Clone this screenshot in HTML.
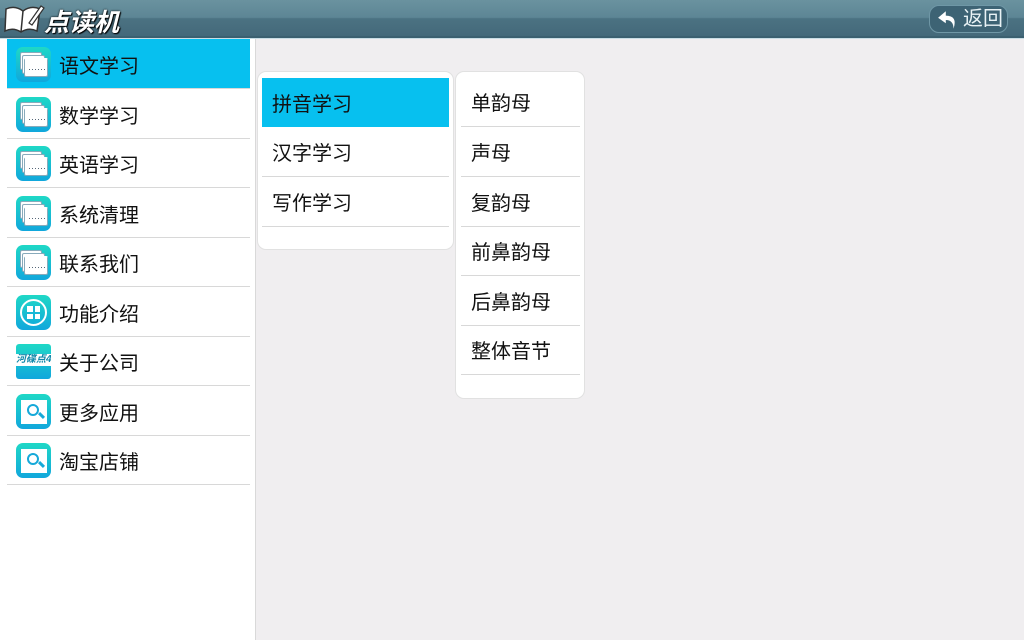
<!DOCTYPE html>
<html><head><meta charset="utf-8"><style>
*{margin:0;padding:0;box-sizing:border-box}
body{width:1024px;height:640px;overflow:hidden;background:#f0eef0;font-family:"Liberation Sans","Noto Sans CJK SC",sans-serif;position:relative}
.hdr{position:absolute;left:0;top:0;width:1024px;height:38px;background:linear-gradient(#6a929f 0,#5d8695 48%,#4b7282 52%,#44697a 100%);border-bottom:2px solid #3b6070}
.hdr:after{content:"";position:absolute;left:0;right:0;bottom:-3px;height:1px;background:#c9dde4}
.logo{position:absolute;left:44px;top:3px;font-size:25px;font-weight:bold;font-style:italic;color:#fff;text-shadow:0 0 2px #000,1px 1px 1px #000}
.back{position:absolute;left:929px;top:5px;width:79px;height:28px;border-radius:10px;background:#3d6374;border:1px solid #6f97a6;color:#e8f2f5;font-size:20px;line-height:27px;padding-left:33px}
.side{position:absolute;left:0;top:39px;width:256px;height:601px;background:#fff;border-right:1px solid #d9d9d9}
.it{position:absolute;left:7px;width:243px;height:50px;border-bottom:1px solid #d8d8d8;font-size:20px;line-height:50px;padding-top:3px;padding-left:52px;color:#111}
.it.on{background:#07c0ef}
.ic{position:absolute;left:9px;top:8px;width:35px;height:35px;border-radius:7px;background:linear-gradient(#1fd8c6,#11a7dc)}
.c1,.c2,.c3{position:absolute;background:#fff;border:1px solid #8ab;border-radius:2px}
.c1{left:4px;top:5px;width:22px;height:18px}
.c2{left:6px;top:8px;width:23px;height:19px}
.c3{left:8px;top:11px;width:24px;height:19px;border-top:2px solid #fff;background:#fff repeating-linear-gradient(90deg,#567 0 1px,transparent 1px 3px) no-repeat 4px 9px/16px 1px}
.pan{position:absolute;background:#fff;border:1px solid #e1e1e1;border-radius:9px}
.r{position:absolute;font-size:20px;line-height:48px;padding-top:3px;padding-left:10px;color:#111;border-bottom:1px solid #d8d8d8;height:50px}
</style></head><body>
<div class="hdr">
<svg style="position:absolute;left:3px;top:3px" width="42" height="32" viewBox="0 0 42 32"><path d="M3 6 Q12 2 20 8 Q28 2 37 6 L34 28 Q26 24 18 29 Q10 24 2 28 Z" fill="#fff" stroke="#333" stroke-width="1.5"/><path d="M20 8 L18 29" stroke="#333" stroke-width="1.5"/><path d="M26 20 L38 3 L41 5 L29 22 Z" fill="#fff" stroke="#333" stroke-width="1.2"/></svg>
<div class="logo">点读机</div>
<div class="back"><svg style="position:absolute;left:7px;top:3px" width="22" height="22" viewBox="0 0 20 20"><path d="M8 2 L1 8 L8 13 L8 10 Q15 10 15 18 Q19 6 8 6 Z" fill="#fff"/></svg>返回</div>
</div>
<div class="side">
<div class="it on" style="top:0"><div class="ic"><div class="c1"></div><div class="c2"></div><div class="c3"></div></div>语文学习</div>
<div class="it" style="top:50px"><div class="ic"><div class="c1"></div><div class="c2"></div><div class="c3"></div></div>数学学习</div>
<div class="it" style="top:99px"><div class="ic"><div class="c1"></div><div class="c2"></div><div class="c3"></div></div>英语学习</div>
<div class="it" style="top:149px"><div class="ic"><div class="c1"></div><div class="c2"></div><div class="c3"></div></div>系统清理</div>
<div class="it" style="top:198px"><div class="ic"><div class="c1"></div><div class="c2"></div><div class="c3"></div></div>联系我们</div>
<div class="it" style="top:248px"><div class="ic"><div style="position:absolute;left:4px;top:4px;width:27px;height:27px;border:2px solid #fff;border-radius:50%"></div><div style="position:absolute;left:11px;top:11px;width:13px;height:13px;background:#fff"></div><div style="position:absolute;left:17px;top:11px;width:1.5px;height:13px;background:#18b8d6"></div><div style="position:absolute;left:11px;top:17px;width:13px;height:1.5px;background:#18b8d6"></div></div>功能介绍</div>
<div class="it" style="top:297px"><div class="ic" style="border-radius:3px"><div style="position:absolute;left:0;top:10px;width:35px;height:12px;background:#fff;font-size:10px;line-height:12px;color:#18a;font-style:italic;font-weight:bold;overflow:hidden;white-space:nowrap">河碟点4</div></div>关于公司</div>
<div class="it" style="top:347px"><div class="ic"><div style="position:absolute;left:5px;top:6px;width:26px;height:24px;background:#fff"></div><div style="position:absolute;left:11px;top:10px;width:12px;height:12px;border:2px solid #16a9d9;border-radius:50%"></div><div style="position:absolute;left:22px;top:20px;width:7px;height:3px;background:#16a9d9;transform:rotate(45deg)"></div></div>更多应用</div>
<div class="it" style="top:396px"><div class="ic"><div style="position:absolute;left:5px;top:6px;width:26px;height:24px;background:#fff"></div><div style="position:absolute;left:11px;top:10px;width:12px;height:12px;border:2px solid #16a9d9;border-radius:50%"></div><div style="position:absolute;left:22px;top:20px;width:7px;height:3px;background:#16a9d9;transform:rotate(45deg)"></div></div>淘宝店铺</div>
</div>
<div class="pan" style="left:257px;top:71px;width:197px;height:179px">
<div class="r" style="left:4px;top:6px;width:187px;background:#07c0ef;border:none;height:49px">拼音学习</div>
<div class="r" style="left:4px;top:55px;width:187px">汉字学习</div>
<div class="r" style="left:4px;top:105px;width:187px">写作学习</div>
</div>
<div class="pan" style="left:455px;top:71px;width:130px;height:328px">
<div class="r" style="left:5px;top:5px;width:119px">单韵母</div>
<div class="r" style="left:5px;top:55px;width:119px">声母</div>
<div class="r" style="left:5px;top:105px;width:119px">复韵母</div>
<div class="r" style="left:5px;top:154px;width:119px">前鼻韵母</div>
<div class="r" style="left:5px;top:204px;width:119px">后鼻韵母</div>
<div class="r" style="left:5px;top:253px;width:119px">整体音节</div>
</div>
</body></html>
